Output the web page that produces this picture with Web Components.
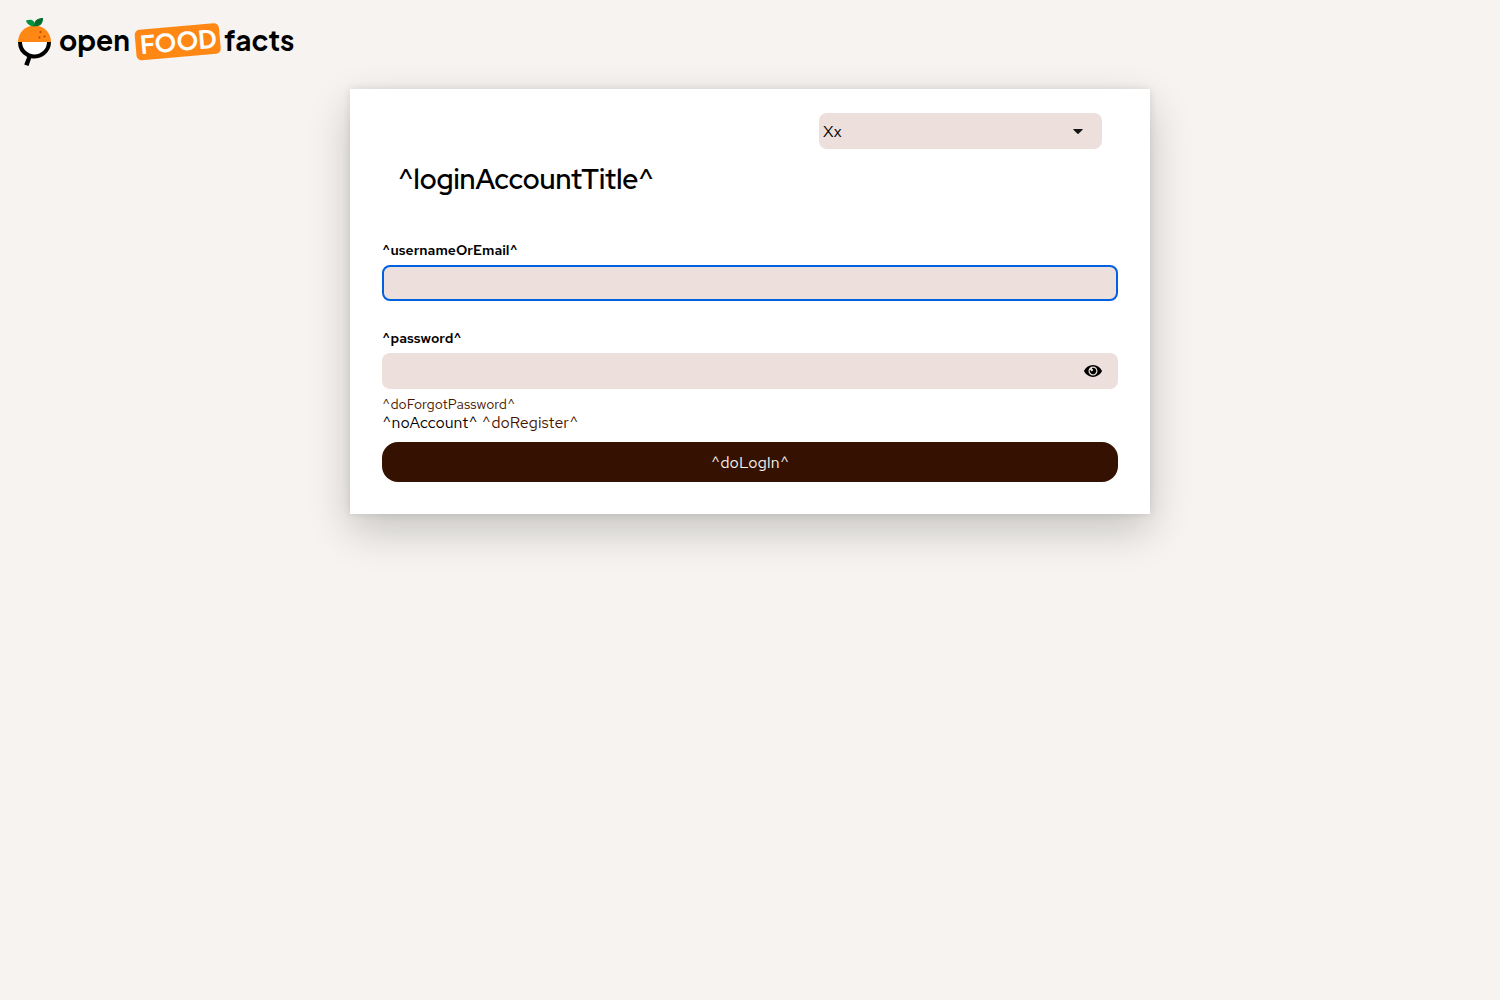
<!DOCTYPE html>
<html lang="en">
<head>
<meta charset="utf-8">
<meta name="viewport" content="width=device-width, initial-scale=1">
<title>Open Food Facts</title>
<style>
  body {
    margin: 0;
    min-height: 100vh;
    background: #f6f3f0;
    color: #000;
    font: 400 16px/20px "Red Hat Text", Inter, sans-serif;
    --accent: #341100;
    --link: #481600;
    --field: #eddfdb;
    --focus: #0060df;
  }
</style>
</head>
<body>
<login-page>
  <brand-logo slot="brand"></brand-logo>
  <login-card heading="^loginAccountTitle^">
    <language-picker slot="tools"></language-picker>
    <login-form></login-form>
  </login-card>
</login-page>

<script>
const define = (name, html, setup) => {
  const template = document.createElement('template');
  template.innerHTML = '<style>*{box-sizing:border-box}</style>' + html;
  customElements.define(name, class extends HTMLElement {
    constructor() {
      super();
      this.attachShadow({ mode: 'open' }).append(template.content.cloneNode(true));
    }
    connectedCallback() {
      if (setup) setup(this, this.shadowRoot);
    }
  });
};

define('brand-logo', `
  <style>
    :host { display: block; width: 288px; }
    svg { display: block; width: 288px; height: 60px; }
    text { font-family: "Plus Jakarta Sans", Inter, sans-serif; font-size: 28px; font-weight: 700; }
    .tag { font-size: 25px; }
  </style>
  <svg viewBox="0 0 288 60" role="img" aria-label="open FOOD facts">
    <path d="M10 34A16.500 16.500 0 0 1 43 34Z" fill="#ff8714"/>
    <path d="M12 34h29a14.500 14.500 0 0 1-29 0Z" fill="#fff"/>
    <path d="M10 34h4a12.500 12.500 0 0 0 25 0h4a16.500 16.500 0 0 1-19.800 16.200L20.500 58l-4.300-1.500 3-7.600A16.500 16.500 0 0 1 10 34Z" fill="#000"/>
    <path d="M18 12.500c6-2 9 0 9 6-4 0-8-2-9-6Z" fill="#00923f"/>
    <path d="M26 18c0-6 4-8 9-8 0 5-2 9-9 8Z" fill="#006d2c"/>
    <g fill="#a94700"><circle cx="32.500" cy="24" r="1"/><circle cx="36.500" cy="28.500" r="1"/><circle cx="31.500" cy="29.500" r="1"/></g>
    <text x="51" y="43">open</text>
    <g transform="rotate(-5 170 34)">
      <rect x="127.500" y="18.500" width="84.500" height="30.500" rx="5" fill="#ff8714"/>
      <text class="tag" x="132" y="43" fill="#fff">FOOD</text>
    </g>
    <text x="216" y="43">facts</text>
  </svg>`);

define('login-page', `
  <style>
    :host { display: block; min-height: 100vh; }
    header { padding: 8px 8px 0; height: 89px; }
    main { width: 100%; max-width: 800px; margin: 0 auto; }
  </style>
  <header><slot name="brand"></slot></header>
  <main><slot></slot></main>`);

define('login-card', `
  <style>
    :host { display: block; background: #fff; padding-bottom: 32px;
      box-shadow: 0 16px 40px rgba(3,3,3,.2), 0 0 8px rgba(3,3,3,.1); }
    header { display: flex; flex-direction: column; gap: 12px; padding: 24px 48px 0; }
    .tools { display: flex; justify-content: flex-end; }
    h1 { margin: 0; font-family: "Red Hat Display", Inter, sans-serif; font-size: 28px; line-height: 36px; font-weight: 600; }
    .body { padding: 43px 32px 0; }
  </style>
  <header>
    <div class="tools"><slot name="tools"></slot></div>
    <h1></h1>
  </header>
  <div class="body"><slot></slot></div>`,
  (host, root) => { root.querySelector('h1').textContent = host.getAttribute('heading'); });

define('language-picker', `
  <style>
    :host { display: grid; width: 283px; max-width: 100%; align-items: center; }
    select, svg { grid-area: 1 / 1; }
    select { appearance: none; width: 100%; height: 36px; padding: 2px 40px 0 4px; border: 0; border-radius: 8px;
      background: var(--field); color: inherit; font: inherit; }
    svg { justify-self: end; width: 10px; height: 5px; margin-right: 19px; pointer-events: none; }
  </style>
  <select aria-label="Language"><option>Xx</option></select>
  <svg viewBox="0 0 10 5" aria-hidden="true"><path d="M.7 0h8.600q.7.200.3.800L5.500 4.800q-.5.400-1 0L.4.800Q0 .200.700 0Z" fill="#151515"/></svg>`);

define('text-field', `
  <style>
    :host { display: block; }
    label { display: block; margin-bottom: 5px; font-size: 14px; line-height: 20px; font-weight: 600; }
    .box { display: flex; align-items: center; height: 36px; border: 2px solid transparent; border-radius: 8px; background: var(--field) border-box; }
    :host([active]) .box { border-color: var(--focus); }
    input { flex: 1; min-width: 0; height: 100%; padding: 0 8px; border: 0; outline: 0; background: none; font: inherit; color: inherit; }
  </style>
  <label for="field"></label>
  <div class="box"><input id="field"><slot></slot></div>`,
  (host, root) => {
    root.querySelector('label').textContent = host.getAttribute('label');
    root.querySelector('input').type = host.getAttribute('type') || 'text';
  });

define('reveal-button', `
  <style>
    :host { display: block; }
    button { display: flex; padding: 8px 14px; border: 0; background: none; color: #000; }
    svg { width: 18px; height: 12px; }
  </style>
  <button type="button" aria-label="Show password">
    <svg viewBox="0 0 18 12"><path fill-rule="evenodd" fill="currentColor" d="M9 0c4 0 7 2.300 8.800 5.400q.4.600 0 1.200C16 9.700 13 12 9 12S2 9.700.2 6.600q-.4-.6 0-1.200C2 2.300 5 0 9 0Zm0 1.500a4.500 4.500 0 1 0 0 9 4.500 4.500 0 0 0 0-9Zm0 1.200a3.300 3.300 0 1 1-3.100 2.200A1.700 1.700 0 0 0 8 2.900Q8.400 2.700 9 2.700Z"/><circle cx="7.800" cy="5" r="1.200" fill="#eddfdb"/></svg>
  </button>`);

define('login-form', `
  <style>
    :host { display: block; }
    form { display: flex; flex-direction: column; }
    text-field + text-field { margin-top: 27px; }
    a { color: var(--link); text-decoration: none; }
    .links { padding-top: 6px; line-height: 18px; }
    .forgot { display: block; font-size: 14px; }
    .register { display: block; line-height: 20px; }
    .submit { margin-top: 9px; height: 40px; padding: 2px 0 0; border: 0; border-radius: 16px; background: var(--accent); color: #f6f3f0; font: inherit; }
  </style>
  <form>
    <text-field label="^usernameOrEmail^" active></text-field>
    <text-field label="^password^" type="password"><reveal-button></reveal-button></text-field>
    <div class="links">
      <a class="forgot" href="#forgot">^doForgotPassword^</a>
      <span class="register">^noAccount^ <a href="#register">^doRegister^</a></span>
    </div>
    <button class="submit" type="submit">^doLogIn^</button>
  </form>`);
</script>
</body>
</html>
